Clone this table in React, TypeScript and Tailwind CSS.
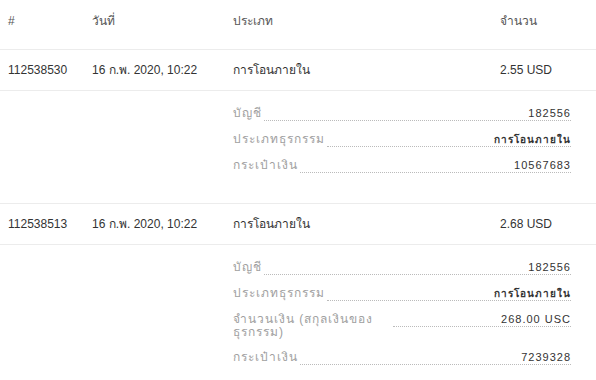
import React from 'react';

type Detail = { label: string; value: string };

type Tx = {
    id: string;
    date: string;
    type: string;
    amount: string;
    details: Detail[];
};

const transactions: Tx[] = [
    {
        id: '112538530',
        date: '16 ก.พ. 2020, 10:22',
        type: 'การโอนภายใน',
        amount: '2.55 USD',
        details: [
            { label: 'บัญชี', value: '182556' },
            { label: 'ประเภทธุรกรรม', value: 'การโอนภายใน' },
            { label: 'กระเป๋าเงิน', value: '10567683' },
        ],
    },
    {
        id: '112538513',
        date: '16 ก.พ. 2020, 10:22',
        type: 'การโอนภายใน',
        amount: '2.68 USD',
        details: [
            { label: 'บัญชี', value: '182556' },
            { label: 'ประเภทธุรกรรม', value: 'การโอนภายใน' },
            { label: 'จำนวนเงิน (สกุลเงินของธุรกรรม)', value: '268.00 USC' },
            { label: 'กระเป๋าเงิน', value: '7239328' },
        ],
    },
];

const cols = 'grid grid-cols-[84px_141px_267px_1fr]';
const isThai = (s: string) => /[\u0E00-\u0E7F]/.test(s);

export default function App() {
    return (
        <div className="w-[596px] h-[380px] overflow-hidden bg-white font-['Liberation_Sans',sans-serif] text-[12px]">
            {/* Header */}
            <div className={`${cols} h-[50px] border-b border-[#ececec] text-[#555] pt-[14px]`}>
                <div className="px-2 leading-[14px]">#</div>
                <div className="px-2 leading-[14px]">วันที่</div>
                <div className="px-2 leading-[14px]">ประเภท</div>
                <div className="px-2 leading-[14px]">จำนวน</div>
            </div>

            {transactions.map((tx) => (
                <div key={tx.id}>
                    <div className={`${cols} h-[41px] items-center border-b border-[#ececec] text-[#333]`}>
                        <div className="px-2">{tx.id}</div>
                        <div className="px-2">{tx.date}</div>
                        <div className="px-2">{tx.type}</div>
                        <div className="px-2">{tx.amount}</div>
                    </div>

                    {/* Details */}
                    <div className="border-b border-[#ececec] pl-[233px] pr-[25px] pt-[16px] pb-[30px] flex flex-col gap-3">
                        {tx.details.map((d) => (
                            <div key={d.label} className="flex items-start">
                                <div className="max-w-[158px] text-[12px] leading-[13px] tracking-[1px] text-[#a0a0a0]">
                                    {d.label}
                                </div>
                                <div
                                    className={`flex-1 ml-[2px] h-[14px] border-b border-dotted border-[#bbb] text-right leading-[13px] tracking-[1px] text-[#333] ${
                                        isThai(d.value) ? 'text-[10px] font-semibold' : 'text-[11px]'
                                    }`}
                                >
                                    {d.value}
                                </div>
                            </div>
                        ))}
                    </div>
                </div>
            ))}
        </div>
    );
}
